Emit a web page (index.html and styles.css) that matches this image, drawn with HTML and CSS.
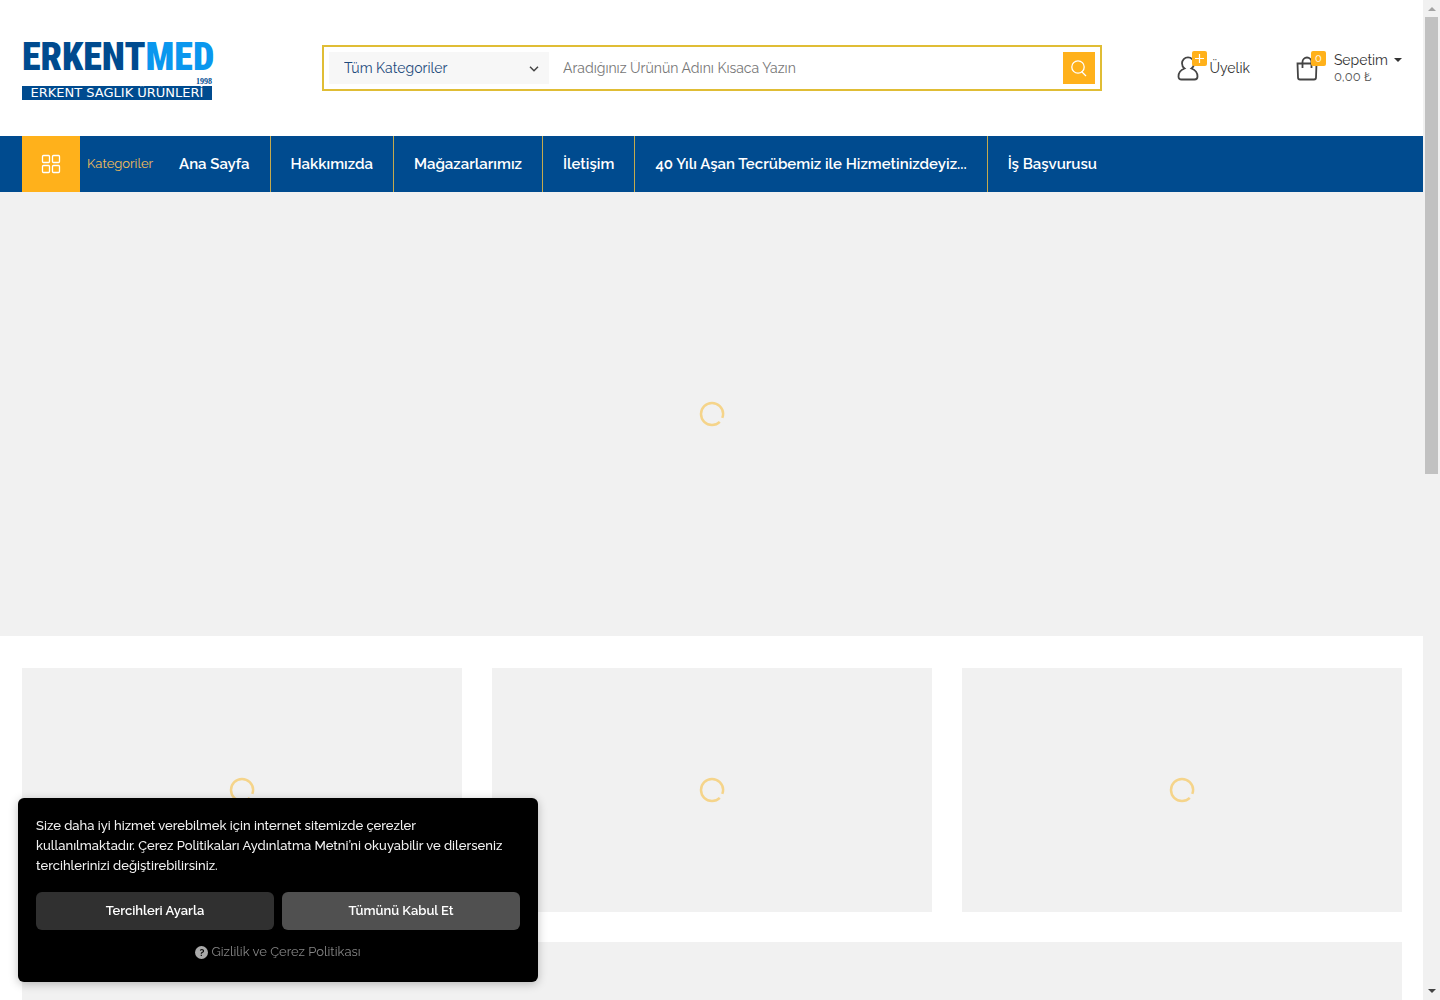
FILE: index.html
```html
<!DOCTYPE html>
<html lang="tr">
<head>
<meta charset="utf-8">
<meta name="viewport" content="width=device-width, initial-scale=1">
<title>Erkent Med</title>
<link rel="stylesheet" href="styles.css">
</head>
<body>
<header class="header">
  <a class="logo" href="#">
    <span class="logo-name">ERKENT<span class="logo-med">MED</span></span>
    <small class="logo-year">1998</small>
    <span class="logo-tag">ERKENT SAGLIK ÜRÜNLERİ</span>
  </a>
  <form class="search">
    <span class="search-category">
      <select class="search-select" aria-label="Kategori"><option>Tüm Kategoriler</option></select>
      <svg class="search-chevron" width="10" height="6" viewBox="0 0 10 6" fill="none" stroke="#444" stroke-width="1.5"><path d="M1 .8l4 4 4-4"/></svg>
    </span>
    <input class="search-input" type="text" aria-label="Ürün ara" placeholder="Aradığınız Ürünün Adını Kısaca Yazın">
    <button class="search-button" type="submit" aria-label="Ara">
      <svg width="18" height="18" viewBox="0 0 18 18" fill="none" stroke="#fff" stroke-width="1.3"><circle cx="8" cy="8" r="6.2"/><path d="M11.500 12.500L16 17"/></svg>
    </button>
  </form>
  <div class="account">
    <a class="account-link" href="#">
      <span class="account-icon">
        <svg width="22" height="26" viewBox="0 0 22 26" fill="none" stroke="#444" stroke-width="1.8"><path d="M7.500 13.500C5.500 12 5 10 5 8.300a6 6 0 0 1 12 0c0 1.700-.5 3.700-2.500 5.200C18.500 15 20.500 18 20.500 21.500c0 2-1.200 3-3 3h-13c-1.800 0-3-1-3-3 0-3.500 2-6.500 6-8z"/></svg>
        <span class="badge"><svg width="9" height="9" viewBox="0 0 9 9" stroke="#fff" stroke-width="1.2"><path d="M4.500 0v9M0 4.500h9"/></svg></span>
      </span>
      <span>Üyelik</span>
    </a>
    <a class="account-link cart" href="#">
      <span class="account-icon">
        <svg width="22" height="26" viewBox="0 0 22 26" fill="none" stroke="#444" stroke-width="1.8"><path d="M1.500 8.500h19l-.5 14q0 2-2 2H4q-2 0-2-2zM6.500 13V7a4.500 4.500 0 0 1 9 0v6"/></svg>
        <span class="badge">0</span>
      </span>
      <span class="cart-text">
        <span class="cart-title">Sepetim <span class="caret"></span></span>
        <span class="cart-total">0,00 ₺</span>
      </span>
    </a>
  </div>
</header>
<nav class="nav">
  <button class="nav-categories" type="button">
    <span class="nav-grid"><svg width="20" height="20" viewBox="0 0 20 20" fill="none" stroke="#fff" stroke-width="1.3"><rect x="1.500" y="1.500" width="7" height="7" rx="1"/><rect x="11.500" y="1.500" width="7" height="7" rx="1"/><rect x="1.500" y="11.500" width="7" height="7" rx="1"/><rect x="11.500" y="11.500" width="7" height="7" rx="1"/></svg></span>
    <span class="nav-label">Kategoriler</span>
  </button>
  <a class="nav-link" href="#">Ana Sayfa</a>
  <a class="nav-link" href="#">Hakkımızda</a>
  <a class="nav-link" href="#">Mağazarlarımız</a>
  <a class="nav-link" href="#">İletişim</a>
  <a class="nav-link" href="#">40 Yılı Aşan Tecrübemiz ile Hizmetinizdeyiz...</a>
  <a class="nav-link" href="#">İş Başvurusu</a>
</nav>
<main class="main">
  <section class="hero"><svg class="spinner" viewBox="0 0 26 26"><circle cx="13" cy="13" r="11"/></svg></section>
  <section class="cards">
    <div class="card"><svg class="spinner" viewBox="0 0 26 26"><circle cx="13" cy="13" r="11"/></svg></div>
    <div class="card"><svg class="spinner" viewBox="0 0 26 26"><circle cx="13" cy="13" r="11"/></svg></div>
    <div class="card"><svg class="spinner" viewBox="0 0 26 26"><circle cx="13" cy="13" r="11"/></svg></div>
    <div class="card card-wide"></div>
  </section>
</main>
<aside class="cookie">
  <p class="cookie-text">Size daha iyi hizmet verebilmek için internet sitemizde çerezler<br>kullanılmaktadır. Çerez Politikaları Aydınlatma Metni’ni okuyabilir ve dilerseniz<br>tercihlerinizi değiştirebilirsiniz.</p>
  <div class="cookie-actions">
    <button class="cookie-button" type="button">Tercihleri Ayarla</button>
    <button class="cookie-button cookie-accept" type="button">Tümünü Kabul Et</button>
  </div>
  <a class="cookie-link" href="#"><span class="cookie-help">?</span>Gizlilik ve Çerez Politikası</a>
</aside>
<div class="scrollbar" aria-hidden="true">
  <span class="scroll-arrow scroll-up"></span>
  <span class="scroll-thumb"></span>
  <span class="scroll-arrow scroll-down"></span>
</div>
</body>
</html>
```
FILE: styles.css
```css
* { box-sizing: border-box; }
body {
  display: flex;
  flex-direction: column;
  margin: 0;
  padding-right: 17px;
  height: 100vh;
  overflow: hidden;
  background: #fff;
  color: #333;
  font: 14px/20px Raleway, Lato, sans-serif;
}
a { color: inherit; text-decoration: none; }
button, input, select { font: inherit; border: 0; margin: 0; padding: 0; }
.header {
  display: grid;
  grid-template-columns: 300px minmax(0, 780px) 1fr;
  align-items: center;
  flex: none;
  height: 136px;
  padding: 0 21px 0 22px;
}
.logo { display: flex; flex-direction: column; width: 190px; height: 64px; }
.logo-name {
  color: #004b8f;
  font: 900 38px/42px "Roboto Condensed", "Liberation Sans Narrow", sans-serif;
}
.logo-med { color: #0a97ee; }
.logo-year {
  align-self: flex-end;
  color: #004b8f;
  font: bold 8px/8px "Liberation Serif", serif;
}
.logo-tag {
  height: 14px;
  background: #004b8f;
  color: #fff;
  text-align: center;
  font: 13px/14px "DejaVu Sans", sans-serif;
  white-space: nowrap;
}
.search {
  display: flex;
  height: 46px;
  padding: 5px;
  border: 2px solid #e0bd35;
}
.search-category { position: relative; width: 220px; background: #f7f7f7; }
.search-select {
  width: 100%;
  height: 32px;
  padding: 0 15px;
  appearance: none;
  background: none;
  color: #1d4a7c;
}
.search-chevron { position: absolute; right: 10px; top: 14px; }
.search-input { flex: 1; min-width: 0; padding: 0 14px; background: none; outline: 0; }
.search-input::placeholder { color: #777; opacity: 1; }
.search-button {
  display: grid;
  place-items: center;
  width: 32px;
  height: 32px;
  background: #ffb11b;
}
.account { display: flex; justify-content: flex-end; gap: 46px; }
.account-link { display: flex; align-items: center; gap: 10px; }
.account-icon { position: relative; display: flex; }
.badge {
  position: absolute;
  left: 15px;
  top: -4px;
  display: grid;
  place-items: center;
  width: 15px;
  height: 15px;
  border-radius: 2px;
  background: #ffb11b;
  color: #fff;
  font-size: 11px;
  line-height: 15px;
}
.cart { gap: 16px; }
.cart-text { display: flex; flex-direction: column; }
.cart-title { display: flex; align-items: center; gap: 6px; line-height: 18px; }
.caret { border: 4px solid transparent; border-top-color: #333; border-bottom: 0; }
.cart-total { color: #555; font-size: 13px; line-height: 16px; }
.nav {
  display: flex;
  flex: none;
  height: 56px;
  padding: 0 22px;
  background: #004b8f;
  color: #fff;
}
.nav-categories {
  display: flex;
  align-items: center;
  gap: 7px;
  width: 137px;
  background: none;
  color: #f2bd5a;
  font-size: 13px;
}
.nav-grid { display: grid; place-items: center; width: 58px; height: 56px; background: #ffb11b; }
.nav-link {
  display: flex;
  align-items: center;
  padding: 0 20px;
  border-right: 1px solid #c4a94d;
  font-size: 15px;
  font-weight: 600;
  white-space: nowrap;
}
.nav-link:last-child { border: 0; }
.main { display: flex; flex: 1; flex-direction: column; min-height: 0; }
.hero, .card { display: grid; place-items: center; background: #f1f1f1; }
.hero { flex: none; height: 444px; }
.cards {
  display: grid;
  flex: 1;
  grid-template-columns: repeat(3, 1fr);
  grid-template-rows: 244px minmax(0, 1fr);
  gap: 30px;
  padding: 32px 21px 0 22px;
}
.card-wide { grid-column: 1 / -1; }
.spinner { width: 26px; height: 26px; }
.spinner circle { fill: none; stroke: #f5d48a; stroke-width: 2.5; stroke-dasharray: 64 6; transform: rotate(45deg); transform-origin: center; }
.cookie {
  position: fixed;
  left: 18px;
  bottom: 18px;
  width: 520px;
  padding: 18px 18px 20px;
  border-radius: 6px;
  background: #000;
  color: #f2f2f2;
  font-size: 13px;
  box-shadow: 0 2px 10px rgba(0, 0, 0, .25);
}
.cookie-text { margin: 0 0 16px; font-weight: 500; white-space: nowrap; }
.cookie-actions { display: grid; grid-template-columns: 1fr 1fr; gap: 8px; }
.cookie-button { height: 38px; border-radius: 6px; background: #303030; color: #fff; font-weight: 600; }
.cookie-accept { background: #505050; }
.cookie-link {
  display: flex;
  justify-content: center;
  align-items: center;
  gap: 3px;
  margin-top: 12px;
  color: #858585;
}
.cookie-help {
  width: 13px;
  height: 13px;
  border-radius: 50%;
  background: #aaa;
  color: #000;
  font-size: 10px;
  font-weight: 700;
  line-height: 13px;
  text-align: center;
}
.scrollbar {
  position: fixed;
  top: 0;
  right: 0;
  bottom: 0;
  display: flex;
  flex-direction: column;
  align-items: center;
  width: 17px;
  padding: 7px 2px;
  background: #f1f1f1;
}
.scroll-thumb { width: 13px; height: 457px; margin: 6px 0 auto; background: #c1c1c1; }
.scroll-arrow { border: 4px solid transparent; }
.scroll-up { border-top: 0; border-bottom-color: #a3a3a3; }
.scroll-down { border-bottom: 0; border-top-color: #444; }
```
